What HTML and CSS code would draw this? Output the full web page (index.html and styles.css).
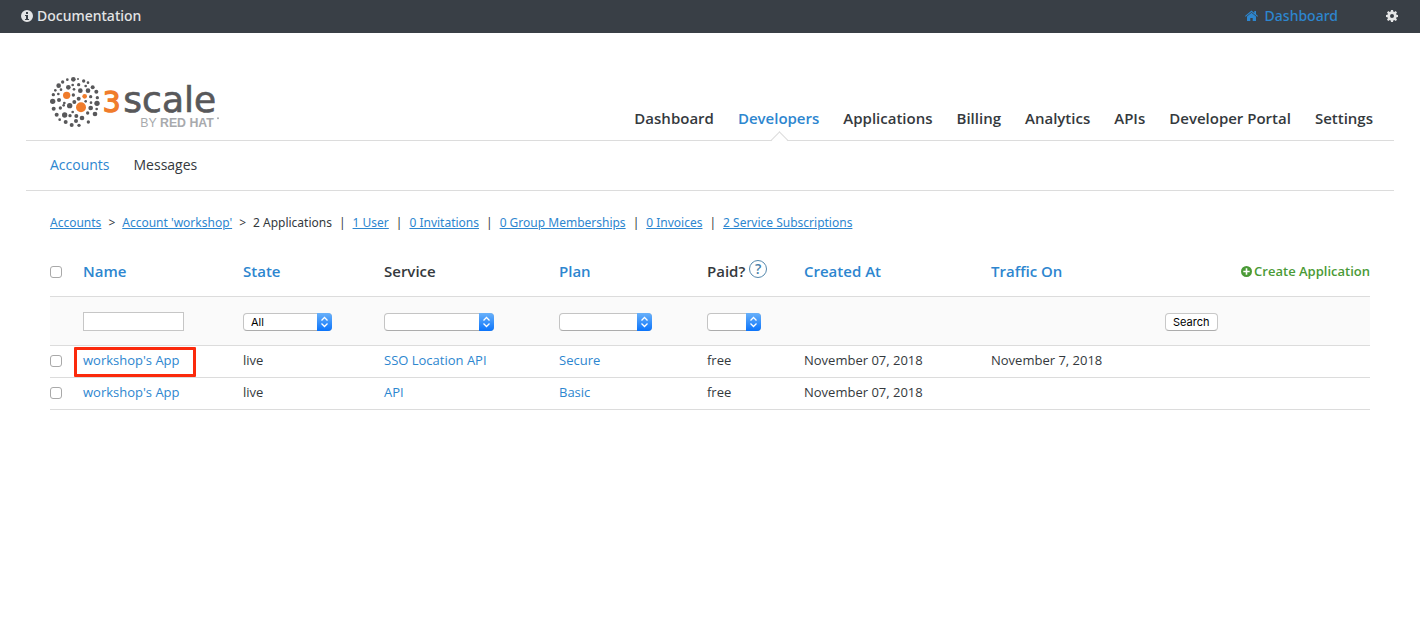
FILE: index.html
```html
<!DOCTYPE html>
<html lang="en">
<head>
    <meta charset="UTF-8">
    <meta name="viewport" content="width=device-width, initial-scale=1.0">
    <title>Applications | 3scale</title>
    <link rel="stylesheet" href="styles.css">
</head>
<body>
    <div class="topbar">
        <a class="topbar-link" href="#">
            <svg class="icon" viewBox="0 0 12 12" aria-hidden="true"><path fill="currentColor" fill-rule="evenodd" d="M6 0a6 6 0 1 0 0 12A6 6 0 0 0 6 0zM5 2h2v2H5zM4 5h3v4h1v1H4V9h1V6H4z"/></svg>
            <span>Documentation</span>
        </a>
        <div class="topbar-right">
            <a class="topbar-link home" href="#">
                <svg class="icon icon-home" viewBox="0 0 13 12" aria-hidden="true"><path fill="currentColor" d="M6.500 2.800L2 6.600V11h3.300V8h2.400v3H11V6.600zM6.500.5L0 6l.7.8 5.800-4.900 5.800 4.900L13 6l-2-1.700V1H9.300v1.900z"/></svg>
                <span>Dashboard</span>
            </a>
            <a class="topbar-link" href="#" aria-label="Account settings">
                <svg class="icon" viewBox="0 0 12 12" aria-hidden="true"><path fill="currentColor" fill-rule="evenodd" d="M5 0h2l.3 1.600 1 .4 1.400-.9 1.300 1.300-.9 1.300.4 1L12 5v2l-1.500.3-.4 1 .9 1.400-1.300 1.300-1.400-.9-1 .4L7 12H5l-.3-1.500-1-.4-1.400.9L1 9.700l.9-1.400-.4-1L0 7V5l1.500-.3.4-1L1 2.400 2.300 1.100l1.400.9 1-.4zM6 4a2 2 0 1 0 0 4 2 2 0 0 0 0-4z"/></svg>
            </a>
        </div>
    </div>

    <header class="header">
        <a class="logo" href="#" aria-label="3scale by Red Hat">
            <svg viewBox="150 228 510 156" aria-hidden="true">
                <g fill="#58585a">
                    <circle cx="220" cy="238" r="7"/><circle cx="202" cy="239" r="4"/><circle cx="234" cy="237" r="3"/>
                    <circle cx="188" cy="246" r="5"/><circle cx="251" cy="243" r="5"/><circle cx="264" cy="248" r="4"/>
                    <circle cx="176" cy="257" r="7"/><circle cx="236" cy="254" r="5"/><circle cx="218" cy="255" r="4"/>
                    <circle cx="205" cy="262" r="7"/><circle cx="257" cy="258" r="4"/><circle cx="278" cy="262" r="6"/>
                    <circle cx="166" cy="271" r="4"/><circle cx="183" cy="269" r="4"/><circle cx="222" cy="268" r="4"/>
                    <circle cx="241" cy="272" r="7"/><circle cx="264" cy="272" r="7"/><circle cx="289" cy="275" r="6"/>
                    <circle cx="160" cy="284" r="5"/><circle cx="175" cy="282" r="4"/><circle cx="220" cy="285" r="5"/>
                    <circle cx="272" cy="290" r="5"/><circle cx="292" cy="293" r="5"/><circle cx="158" cy="304" r="8"/>
                    <circle cx="177" cy="300" r="6"/><circle cx="193" cy="309" r="4"/><circle cx="236" cy="296" r="6"/>
                    <circle cx="223" cy="306" r="6"/><circle cx="257" cy="304" r="4"/><circle cx="273" cy="308" r="4"/>
                    <circle cx="291" cy="310" r="8"/><circle cx="209" cy="317" r="8"/><circle cx="191" cy="316" r="4"/>
                    <circle cx="161" cy="326" r="6"/><circle cx="181" cy="324" r="5"/><circle cx="272" cy="324" r="7"/>
                    <circle cx="290" cy="327" r="4"/><circle cx="218" cy="336" r="4"/><circle cx="170" cy="344" r="6"/>
                    <circle cx="194" cy="345" r="8"/><circle cx="210" cy="347" r="5"/><circle cx="229" cy="348" r="6"/>
                    <circle cx="246" cy="354" r="7"/><circle cx="263" cy="339" r="5"/><circle cx="285" cy="342" r="7"/>
                    <circle cx="179" cy="359" r="4"/><circle cx="197" cy="366" r="6"/><circle cx="228" cy="363" r="6"/>
                    <circle cx="265" cy="366" r="5"/><circle cx="215" cy="375" r="6"/><circle cx="237" cy="376" r="5"/>
                </g>
                <g fill="#f07c2b">
                    <circle cx="200" cy="286" r="11"/><circle cx="254" cy="289" r="7"/><circle cx="243" cy="322" r="15"/>
                </g>
                <text class="logo-three" x="308" y="336">3</text>
                <text class="logo-scale" x="370" y="336">scale</text>
                <text class="logo-by" x="421" y="380">BY <tspan class="logo-redhat">RED HAT</tspan></text>
                <circle cx="654" cy="355" r="3" fill="#a8aaad"/>
            </svg>
        </a>
        <nav class="main-nav">
            <a href="#">Dashboard</a>
            <a class="active" href="#">Developers</a>
            <a href="#">Applications</a>
            <a href="#">Billing</a>
            <a href="#">Analytics</a>
            <a href="#">APIs</a>
            <a href="#">Developer Portal</a>
            <a href="#">Settings</a>
        </nav>
    </header>

    <nav class="sub-nav">
        <a class="active" href="#">Accounts</a>
        <a href="#">Messages</a>
    </nav>

    <main class="content">
        <div class="breadcrumb">
            <a href="#">Accounts</a>
            <span>&gt;</span>
            <a href="#">Account 'workshop'</a>
            <span>&gt;</span>
            <span>2 Applications</span>
            <span>|</span>
            <a href="#">1 User</a>
            <span>|</span>
            <a href="#">0 Invitations</a>
            <span>|</span>
            <a href="#">0 Group Memberships</a>
            <span>|</span>
            <a href="#">0 Invoices</a>
            <span>|</span>
            <a href="#">2 Service Subscriptions</a>
        </div>

        <table class="apps">
            <colgroup>
                <col class="col-check">
                <col class="col-name">
                <col class="col-state">
                <col class="col-service">
                <col class="col-plan">
                <col class="col-paid">
                <col class="col-date">
                <col class="col-traffic">
                <col>
            </colgroup>
            <thead>
                <tr class="titles">
                    <th><input type="checkbox" aria-label="Select all"></th>
                    <th><a href="#">Name</a></th>
                    <th><a href="#">State</a></th>
                    <th>Service</th>
                    <th><a href="#">Plan</a></th>
                    <th>
                        <div class="paid">Paid? <a class="help" href="#">?</a></div>
                    </th>
                    <th><a href="#">Created At</a></th>
                    <th><a href="#">Traffic On</a></th>
                    <th>
                        <a class="create" href="#">
                            <svg viewBox="0 0 11 11" aria-hidden="true"><path fill="currentColor" fill-rule="evenodd" d="M5.500 0a5.500 5.500 0 1 0 0 11 5.500 5.500 0 0 0 0-11zM4.700 2.300h1.600v2.400h2.400v1.600H6.300v2.400H4.700V6.300H2.300V4.700h2.400z"/></svg>
                            <span>Create Application</span>
                        </a>
                    </th>
                </tr>
                <tr class="filters">
                    <td></td>
                    <td><input class="name-filter" type="text" aria-label="Name"></td>
                    <td><span class="select select-state"><select aria-label="State"><option>All</option><option>live</option></select></span></td>
                    <td><span class="select select-service"><select aria-label="Service"><option></option></select></span></td>
                    <td><span class="select select-plan"><select aria-label="Plan"><option></option></select></span></td>
                    <td><span class="select select-paid"><select aria-label="Paid"><option></option></select></span></td>
                    <td></td>
                    <td></td>
                    <td><button class="search" type="submit">Search</button></td>
                </tr>
            </thead>
            <tbody>
                <tr>
                    <td><input type="checkbox" aria-label="Select workshop's App, Secure"></td>
                    <td><a class="marked" href="#">workshop's App</a></td>
                    <td>live</td>
                    <td><a href="#">SSO Location API</a></td>
                    <td><a href="#">Secure</a></td>
                    <td>free</td>
                    <td>November 07, 2018</td>
                    <td>November 7, 2018</td>
                    <td></td>
                </tr>
                <tr>
                    <td><input type="checkbox" aria-label="Select workshop's App, Basic"></td>
                    <td><a href="#">workshop's App</a></td>
                    <td>live</td>
                    <td><a href="#">API</a></td>
                    <td><a href="#">Basic</a></td>
                    <td>free</td>
                    <td>November 07, 2018</td>
                    <td></td>
                    <td></td>
                </tr>
            </tbody>
        </table>
    </main>
</body>
</html>
```

FILE: styles.css
```css
:root {
    --bar: #393f46;
    --blue: #2d86cf;
    --green: #4a9a36;
    --text: #34393d;
    --line: #dcdcdc;
}

* {
    margin: 0;
    padding: 0;
    box-sizing: border-box;
}

body {
    background: #fff;
    color: var(--text);
    font-family: "Open Sans", "Noto Sans", sans-serif;
    font-size: 13px;
    line-height: 18px;
}

a {
    color: var(--blue);
    text-decoration: none;
}

/* Top bar */
.topbar {
    display: flex;
    justify-content: space-between;
    align-items: center;
    height: 33px;
    padding: 0 22px 2px 21px;
    background: var(--bar);
    font-family: "Noto Sans", sans-serif;
    font-size: 14px;
    font-weight: 500;
}

.topbar-link {
    display: flex;
    align-items: center;
    gap: 4px;
    color: #e3e4e5;
}

.topbar-link.home {
    gap: 7px;
    color: var(--blue);
}

.topbar-right {
    display: flex;
    gap: 48px;
}

.icon {
    width: 12px;
    height: 12px;
}

.icon-home {
    width: 13px;
}

/* Header */
.header {
    display: flex;
    justify-content: space-between;
    align-items: flex-end;
    height: 108px;
    margin: 0 26px;
    padding: 0 21px 0 24px;
    border-bottom: 1px solid var(--line);
}

.logo svg {
    display: block;
    width: 170px;
    height: 52px;
    margin-bottom: 12px;
    overflow: visible;
}

.logo-three {
    fill: #f07c2b;
    stroke: #f07c2b;
    stroke-width: 4;
    font: 400 84px "DejaVu Sans", sans-serif;
}

.logo-scale {
    fill: #58585a;
    stroke: #58585a;
    stroke-width: 2;
    font: 400 108px "DejaVu Sans", sans-serif;
}

.logo-by {
    fill: #a8aaad;
    font: 400 37px "Liberation Sans", sans-serif;
}

.logo-redhat {
    font-weight: 700;
}

.main-nav {
    display: flex;
    gap: 24px;
    font-size: 15px;
    font-weight: 600;
    line-height: 20px;
}

.main-nav a {
    position: relative;
    padding-bottom: 12px;
    color: var(--text);
}

.main-nav .active {
    color: var(--blue);
}

.main-nav .active::after {
    content: "";
    position: absolute;
    left: 50%;
    bottom: -7px;
    width: 12px;
    height: 12px;
    margin-left: -6px;
    background: linear-gradient(135deg, #fff 50%, transparent 50%);
    border-top: 1px solid var(--line);
    border-left: 1px solid var(--line);
    transform: rotate(45deg);
}

.sub-nav {
    display: flex;
    align-items: center;
    gap: 24px;
    height: 50px;
    margin: 0 26px;
    padding: 0 24px 2px;
    border-bottom: 1px solid var(--line);
    font-size: 14px;
}

.sub-nav a {
    color: var(--text);
}

.sub-nav .active {
    color: var(--blue);
}

/* Content */
.content {
    padding: 23px 50px;
}

.breadcrumb {
    display: flex;
    gap: 7px;
    font-family: "Noto Sans", sans-serif;
    font-size: 12px;
}

.breadcrumb a {
    text-decoration: underline;
}

.apps {
    width: 100%;
    margin-top: 15px;
    border-collapse: collapse;
    table-layout: fixed;
}

.col-check { width: 33px; }
.col-name { width: 160px; }
.col-state { width: 141px; }
.col-service { width: 175px; }
.col-plan { width: 148px; }
.col-paid { width: 97px; }
.col-date { width: 187px; }
.col-traffic { width: 174px; }

.apps th,
.apps td {
    text-align: left;
    vertical-align: middle;
    white-space: nowrap;
}

.apps tr {
    height: 32px;
    border-bottom: 1px solid var(--line);
}

.apps .titles {
    height: 49px;
    font-size: 15px;
}

.apps th {
    font-weight: 600;
}

.apps .filters {
    height: 49px;
    background: #fafafa;
}

.apps .filters td {
    padding-top: 2px;
}

.apps tbody td {
    padding-bottom: 2px;
}

.apps td:first-child,
.apps th:first-child {
    padding-top: 2px;
}

input[type="checkbox"] {
    display: block;
    appearance: none;
    width: 12px;
    height: 12px;
    background: #fff;
    border: 1px solid #a9a9a9;
    border-radius: 3px;
}

input[type="checkbox"]:checked {
    background: #2f83f5;
}

.paid {
    display: flex;
    align-items: center;
    gap: 4px;
}

.help {
    width: 18px;
    height: 18px;
    margin-bottom: 5px;
    border: 1px solid #5588ad;
    border-radius: 50%;
    color: #4a80a8;
    font-size: 14px;
    line-height: 16px;
    text-align: center;
}

.create {
    display: flex;
    justify-content: flex-end;
    align-items: center;
    gap: 2px;
    color: var(--green);
    font-size: 13px;
}

.create svg {
    width: 11px;
    height: 11px;
}

.name-filter {
    display: block;
    width: 101px;
    height: 19px;
    padding: 0 4px;
    border: 1px solid #c6c6c6;
}

.select {
    display: block;
    position: relative;
    height: 18px;
}

.select-state { width: 89px; }
.select-service { width: 110px; }
.select-plan { width: 93px; }
.select-paid { width: 54px; }

.select select {
    display: block;
    appearance: none;
    width: 100%;
    height: 18px;
    padding: 0 7px;
    background: #fff;
    border: 1px solid #c4c4c4;
    border-bottom-color: #acacac;
    border-radius: 4px;
    color: #000;
    font: 11px/16px Inter, sans-serif;
}

/* blue stepper on the right of each drop-down */
.select::after {
    content: "";
    position: absolute;
    top: 0;
    right: 0;
    width: 15px;
    height: 18px;
    border-radius: 0 4px 4px 0;
    background:
        url("data:image/svg+xml,%3Csvg xmlns='http://www.w3.org/2000/svg' viewBox='0 0 15 18'%3E%3Cpath d='M4.500 7.500l3-3 3 3M4.500 10.500l3 3 3-3' fill='none' stroke='white' stroke-width='1.300'/%3E%3C/svg%3E"),
        linear-gradient(#69b1fa, #0b74fb);
    pointer-events: none;
}

.search {
    display: block;
    height: 18px;
    padding: 0 7px;
    background: #fff;
    border: 1px solid #c8c8c8;
    border-bottom-color: #acacac;
    border-radius: 4px;
    color: #000;
    font: 11px/16px Inter, sans-serif;
}

.marked {
    position: relative;
}

.marked::after {
    content: "";
    position: absolute;
    inset: -4px -16px -8px -9px;
    border: 3px solid #fb2a0c;
    border-radius: 1px;
}
```
